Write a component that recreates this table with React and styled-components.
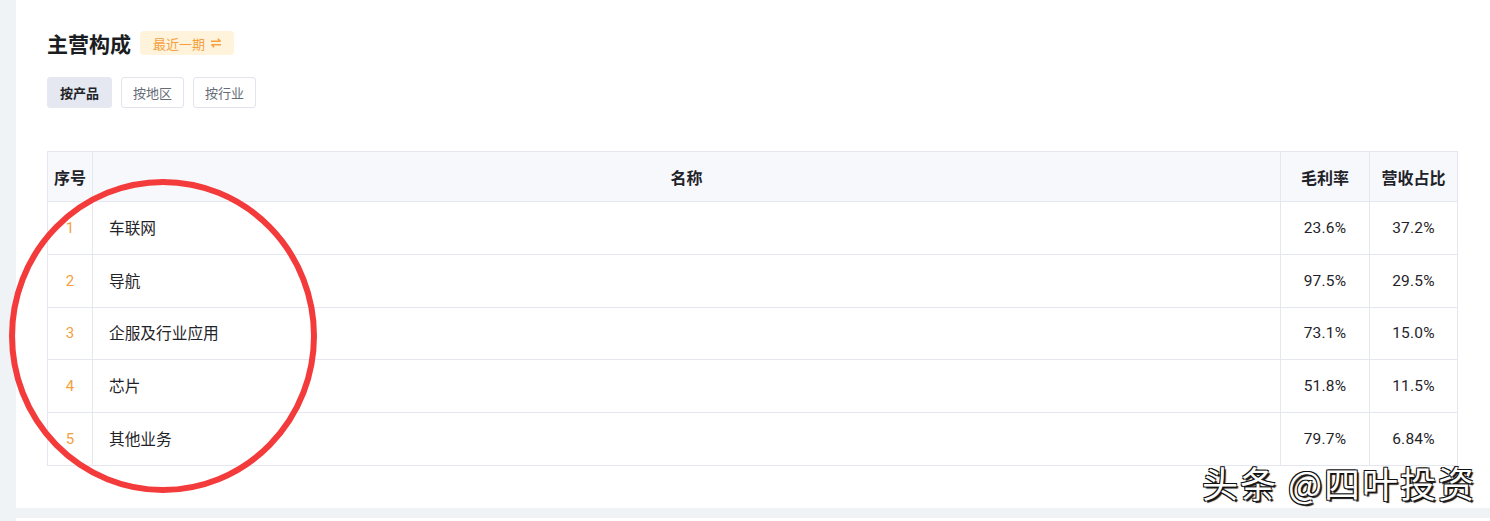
import React from 'react';
import styled, { createGlobalStyle } from 'styled-components';

const rows = [
  { name: '车联网', margin: '23.6%', share: '37.2%' },
  { name: '导航', margin: '97.5%', share: '29.5%' },
  { name: '企服及行业应用', margin: '73.1%', share: '15.0%' },
  { name: '芯片', margin: '51.8%', share: '11.5%' },
  { name: '其他业务', margin: '79.7%', share: '6.84%' },
];

const tabs = ['按产品', '按地区', '按行业'];

export default function App() {
  return (
    <>
      <GlobalStyle />
      <Page>
        <Panel>
          <TitleRow>
            <Title>主营构成</Title>
            <Badge>
              最近一期 <SwapIcon />
            </Badge>
          </TitleRow>
          <Tabs>
            {tabs.map((t, i) => (
              <Tab key={t} $active={i === 0}>
                {t}
              </Tab>
            ))}
          </Tabs>
          <Table>
            <thead>
              <tr>
                <Th $w={44}>序号</Th>
                <Th>名称</Th>
                <Th $w={88}>毛利率</Th>
                <Th $w={87}>营收占比</Th>
              </tr>
            </thead>
            <tbody>
              {rows.map((r, i) => (
                <tr key={r.name}>
                  <Index>{i + 1}</Index>
                  <NameCell>{r.name}</NameCell>
                  <Num>{r.margin}</Num>
                  <Num>{r.share}</Num>
                </tr>
              ))}
            </tbody>
          </Table>
          <Circle width="310" height="316" viewBox="0 0 310 316">
            <ellipse cx="155" cy="157" rx="151" ry="154" fill="none" stroke="#f43b3b" strokeWidth="6" />
          </Circle>
          <Watermark>头条 @四叶投资</Watermark>
        </Panel>
        <NextPanel />
      </Page>
    </>
  );
}

function SwapIcon() {
  return (
    <svg width="12" height="10" viewBox="0 0 12 10" style={{ marginLeft: 5 }}>
      <path d="M1 3.2h9.5M7.8 0.8l2.7 2.4M11 6.8H1.5M4.2 9.2L1.5 6.8" stroke="#f5a03c" strokeWidth="1.4" fill="none" />
    </svg>
  );
}

const GlobalStyle = createGlobalStyle`
  body {
    margin: 0;
    background: #f0f3f6;
    font-family: "Noto Sans CJK SC", "Noto Sans", sans-serif;
    color: #1f2329;
  }
`;

const Page = styled.div`
  padding-left: 16px;
  height: 521px;
  overflow: hidden;
`;

const Panel = styled.div`
  position: relative;
  background: #fff;
  height: 508px;
  box-sizing: border-box;
  padding: 30px 31px 0 31px;
`;

const NextPanel = styled.div`
  background: #fff;
  height: 20px;
  margin-top: 10px;
`;

const TitleRow = styled.div`
  display: flex;
  align-items: center;
  gap: 9px;
  height: 26px;
`;

const Title = styled.h2`
  margin: 0;
  font-size: 21px;
  font-weight: 700;
  color: #1a1d22;
  line-height: 26px;
`;

const Badge = styled.span`
  display: inline-flex;
  align-items: center;
  height: 24px;
  padding: 0 12px 0 13px;
  border-radius: 4px;
  background: #fff3dc;
  color: #f5a03c;
  font-size: 13px;
`;

const Tabs = styled.div`
  display: flex;
  gap: 9px;
  margin-top: 21px;
`;

const Tab = styled.div`
  height: 31px;
  padding: 0 ${(p) => (p.$active ? 12 : 11)}px;
  display: flex;
  align-items: center;
  box-sizing: border-box;
  border-radius: 3px;
  font-size: 13px;
  font-weight: ${(p) => (p.$active ? 700 : 400)};
  color: ${(p) => (p.$active ? '#1f2329' : '#666b75')};
  background: ${(p) => (p.$active ? '#e5e8f0' : '#fff')};
  border: 1px solid ${(p) => (p.$active ? '#e5e8f0' : '#e1e4ec')};
`;

const Table = styled.table`
  margin-top: 43px;
  width: 1411px;
  border-collapse: collapse;
  table-layout: fixed;
  font-size: 15.7px;

  td,
  th {
    border: 1px solid #e4e7ef;
    padding: 0;
  }

  tbody td {
    height: 51.8px;
    line-height: 20px;
  }
`;

const Th = styled.th`
  width: ${(p) => (p.$w ? `${p.$w}px` : 'auto')};
  height: 49px;
  background: #f7f8fc;
  font-size: 16px;
  font-weight: 700;
  color: #1f2329;
`;

const Index = styled.td`
  text-align: center;
  color: #f5a03c;
  font-family: Roboto, sans-serif;
  font-size: 15px;
`;

const NameCell = styled.td`
  && {
    padding-left: 16px;
  }
  color: #1f2329;
`;

const Num = styled.td`
  text-align: center;
  font-family: Roboto, sans-serif;
  font-size: 15.5px;
  letter-spacing: 0.2px;
  color: #1f2329;
`;

const Circle = styled.svg`
  position: absolute;
  left: -8px;
  top: 179px;
  pointer-events: none;
`;

const Watermark = styled.div`
  position: absolute;
  right: 14px;
  bottom: 0;
  font-size: 36px;
  color: #fff;
  letter-spacing: 2px;
  text-shadow: -1px -1px 0 #111, 1px -1px 0 #111, -1px 1px 0 #111, 2px 2px 1px #111;
`;
